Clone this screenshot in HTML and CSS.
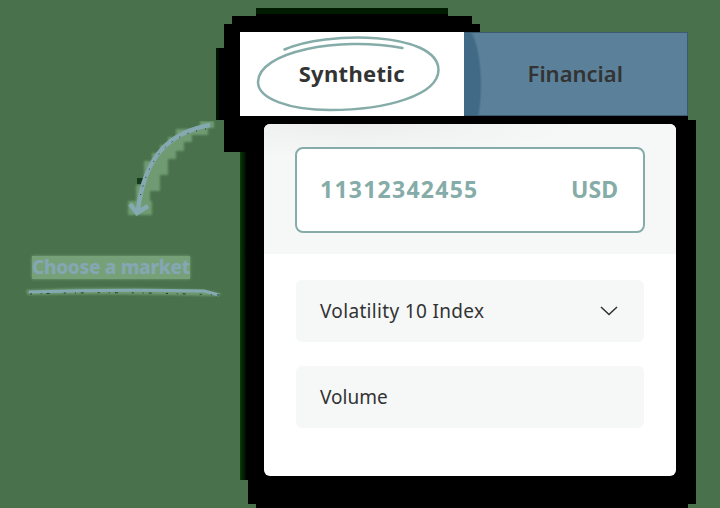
FILE: index.html
```html
<!DOCTYPE html>
<html lang="en">
<head>
<meta charset="utf-8">
<title>Choose a market</title>
<link rel="stylesheet" href="styles.css">
</head>
<body>
<main class="scene">
  <svg class="shadow" viewBox="0 0 720 508" aria-hidden="true">
    <defs>
      <linearGradient id="edge"><stop offset="0" stop-color="#083b08"/><stop offset="1" stop-color="#000"/></linearGradient>
    </defs>
    <path d="M256 8H448V16H472V24H480V115H688V120H696V504H688V508H256V504H248V480H240V152H224V120H216V48H224V24H232V16H256Z"/>
    <path fill="url(#edge)" d="M240 152H247V480H240Z"/>
    <path fill="#001b00" d="M256 8H448V14H256Z"/>
    <path fill="#001200" d="M216 48H219V120H216Z"/>
  </svg>
  <aside class="note">
    <svg class="arrow" viewBox="0 0 96 102" aria-hidden="true">
      <path class="halo" d="M80 0H94V7H88V14H72V21H64V30H56V38H48V54H40V70H30V80H32V94H8V80H16V64H24V40H32V32H40V24H48V16H56V8H80Z"/>
      <path fill="#16391b" d="M17 57H24V63H17Z"/>
      <path d="M90 4C52 11 25 32 18 89M10 83l7 9 11-7" fill="none" stroke="#84a9b0" stroke-width="4.5"/>
      <path d="M86 8C50 13 27 36 19 82" fill="none" stroke="#1d352c" stroke-dasharray="1 8"/>
    </svg>
    <p class="note-text">Choose a market</p>
    <svg class="underline" viewBox="0 0 200 12" aria-hidden="true">
      <path class="halo" d="M2 4Q80 0 180 4L198 8L192 10Q80 7 4 9Z"/>
      <path d="M5 6Q90 3 180 5L195 9" fill="none" stroke="#84a9b2" stroke-width="3"/>
      <path d="M6 8Q90 5 195 9" fill="none" stroke="#203b32" stroke-dasharray="2 9 1 5 3 14"/>
    </svg>
  </aside>
  <section class="widget">
    <nav class="tabs">
      <div class="tab active">
        <svg class="ring" viewBox="0 0 224 84" aria-hidden="true">
          <path d="M44.500 17.500C85 -1 198 -1 198.500 38C198 63 147 78 90 78C50 78 18 67 18 50C18 20 98 4 162.500 16"/>
        </svg>
        <span class="synthetic">Synthetic</span>
      </div>
      <div class="tab inactive"><span class="financial">Financial</span></div>
    </nav>
    <div class="card">
      <div class="account-area">
        <div class="account"><span class="number">11312342455</span><span class="currency">USD</span></div>
      </div>
      <div class="fields">
        <div class="field"><span class="index">Volatility 10 Index</span>
          <svg class="chevron" viewBox="0 0 18 10" aria-hidden="true"><path d="M1 1L9 8.500L17 1"/></svg>
        </div>
        <div class="field"><span class="volume">Volume</span></div>
      </div>
    </div>
  </section>
</main>
</body>
</html>
```
FILE: styles.css
```css
* { box-sizing: border-box; }
body { margin: 0; background: #49714b; font-family: "Noto Sans", sans-serif; color: #333; }
.scene { position: relative; width: 720px; height: 508px; overflow: hidden; display: flex; }
.shadow { position: absolute; inset: 0; width: 720px; height: 508px; }
.note { position: relative; width: 240px; flex: none; padding: 121px 0 0 24px; }
.arrow { display: block; width: 96px; height: 102px; margin-left: 96px; }
.halo { fill: #709b72; filter: blur(1px); }
.note-text { width: 158px; height: 23px; margin: 33px 0 0 8px; background: #76a178; color: #84a7b3; font-size: 19px; font-weight: 800; line-height: 22px; letter-spacing: -0.3px; white-space: nowrap; box-shadow: 0 0 3px #76a178; }
.underline { display: block; width: 200px; height: 12px; margin-top: 7px; }
.widget { position: relative; width: 448px; padding-top: 32px; }
.tabs { display: flex; height: 84px; }
.tab { position: relative; flex: 1; display: flex; align-items: center; justify-content: center; padding-bottom: 2px; font-size: 22px; white-space: nowrap; }
.active { background: #fff; font-weight: 700; }
.inactive { background: radial-gradient(ellipse 18px 62px at 0 52px, #416a86 0 88%, #5a8199 100%); border: 1px solid #3c5b70; border-left: 0; font-weight: 600; }
.ring { position: absolute; inset: 0; width: 224px; height: 84px; fill: none; stroke: #85aca8; stroke-width: 2.5; stroke-linecap: round; }
.synthetic { position: relative; letter-spacing: 0.3px; }
.card { width: 412px; height: 352px; margin: 8px 0 0 24px; background: #fff; border-radius: 6px; overflow: hidden; }
.account-area { height: 130px; padding: 23px 31px; background: radial-gradient(ellipse 220px 35px at 90px 0, #ededed, #f6f8f8); }
.account { height: 86px; display: flex; align-items: center; justify-content: space-between; padding: 0 25px 2px 23px; border: 2px solid #85aca8; border-radius: 8px; background: #fff; color: #85aca8; font-size: 23px; font-weight: 700; }
.number { letter-spacing: 1.25px; }
.fields { display: grid; gap: 24px; padding: 26px 32px; }
.field { height: 62px; padding: 0 26px 0 24px; display: flex; align-items: center; justify-content: space-between; border-radius: 6px; background: #f6f8f8; font-size: 19px; }
.index { letter-spacing: 0.33px; }
.chevron { width: 18px; height: 10px; fill: none; stroke: #333; stroke-width: 1.6; }
```
